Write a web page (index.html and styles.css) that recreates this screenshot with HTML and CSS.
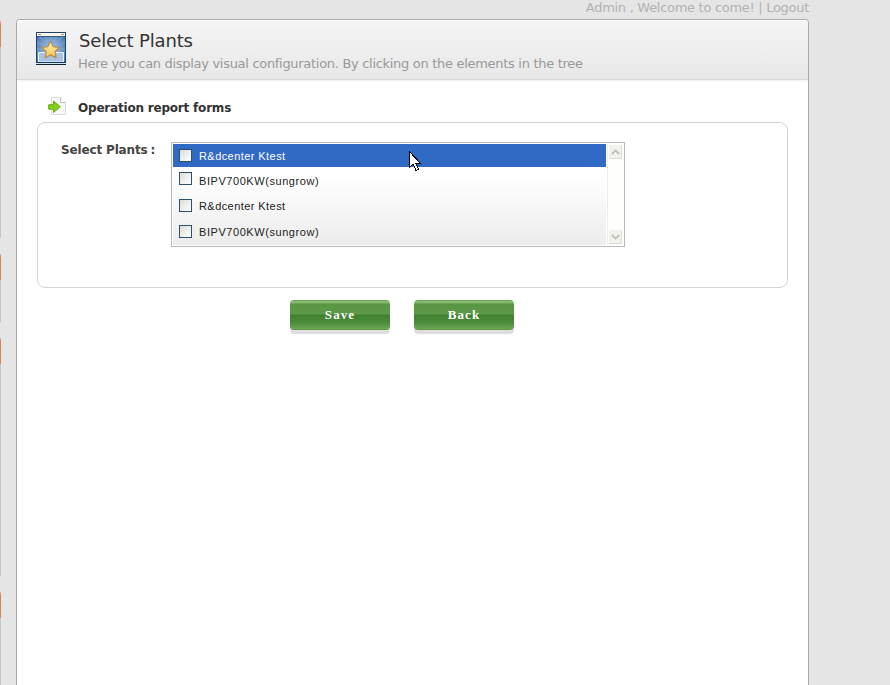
FILE: index.html
```html
<!DOCTYPE html>
<html lang="en">
<head>
<meta charset="utf-8">
<title>Select Plants</title>
<link rel="stylesheet" href="styles.css">
</head>
<body>
<div class="page">
  <aside class="rail">
    <i class="tab tab-first"></i><i class="line line-a"></i>
    <i class="tab"></i><i class="line line-b"></i>
    <i class="tab"></i><i class="line line-c"></i>
    <i class="tab"></i><i class="line line-d"></i>
  </aside>
  <div class="main">
    <div class="topbar"><span class="welcome">Admin , Welcome to come! | Logout</span></div>
    <section class="window">
      <header class="head">
        <svg class="head-icon" width="30" height="33" viewBox="0 0 30 33">
          <defs>
            <radialGradient id="sky" cx=".5" cy=".55" r=".65"><stop offset="0" stop-color="#a9cdec"/><stop offset="1" stop-color="#4673ad"/></radialGradient>
            <linearGradient id="gold" x2="0" y2="1"><stop offset="0" stop-color="#fff3a0"/><stop offset="1" stop-color="#f3c35a"/></linearGradient>
          </defs>
          <rect x=".5" y=".5" width="29" height="30" fill="url(#sky)" stroke="#24415f"/>
          <path d="M15 17 3 4M15 17 9 4M15 17V4M15 17 21 4M15 17 27 4M15 17 1 10M15 17 29 10M15 17 1 17M15 17H29" stroke="#86b1dc" stroke-width="1" opacity=".65"/>
          <rect x="1" y="1" width="28" height="3" fill="#f7f7f4"/>
          <path d="M2 2.5h3M25 2.500h3" stroke="#bd9358"/>
          <path d="M1 4.5h28" stroke="#38597f"/>
          <path d="M2.500 30V20.500h25V30z" fill="#a9c2df" stroke="#e8f2fb"/>
          <path d="M14.600 9.200l2.700 5.400 6 .9-4.300 4.200 1 6-5.400-2.800-5.400 2.800 1-6-4.300-4.200 6-.9z" fill="url(#gold)" stroke="#b68b50" stroke-width="1.2" stroke-linejoin="round"/>
          <path d="M0 30.500h30" stroke="#14385a"/><path d="M0 31.500h30" stroke="#d3e5ef"/><path d="M0 32.500h30" stroke="#10202c"/>
        </svg>
        <div class="head-text">
          <h1>Select Plants</h1>
          <p>Here you can display visual configuration. By clicking on the elements in the tree</p>
        </div>
      </header>
      <div class="content">
        <div class="section-title">
          <svg width="19" height="20" viewBox="0 0 19 20">
            <path d="M3.500 1.500h9l5 5v12h-14z" fill="#f8f8f8" stroke="#dcdcdc"/>
            <path d="M12.500 1.500v5h5" fill="#fff" stroke="#bdbdbd"/>
            <path d="M.7 8.700h4.800V5l6.800 5.800-6.800 5.700V13.200H.7z" fill="#84ce13" stroke="#66ae18" stroke-linejoin="round"/>
          </svg>
          <h2>Operation report forms</h2>
        </div>
        <div class="panel">
          <div class="label"><span>Select Plants</span><b>:</b></div>
          <div class="listbox">
            <ul class="list">
              <li class="row selected"><i class="check"></i><span class="name-a">R&amp;dcenter Ktest</span></li>
              <li class="row second"><i class="check"></i><span class="name-b">BIPV700KW(sungrow)</span></li>
              <li class="row third"><i class="check"></i><span class="name-a">R&amp;dcenter Ktest</span></li>
              <li class="row"><i class="check"></i><span class="name-b">BIPV700KW(sungrow)</span></li>
            </ul>
            <div class="scroll">
              <div class="arrow"><svg width="9" height="6" viewBox="0 0 9 6"><path d="M.8 5 4.500 1.400 8.200 5" fill="none" stroke="#bebeb8" stroke-width="1.8"/></svg></div>
              <div class="arrow"><svg width="9" height="6" viewBox="0 0 9 6"><path d="M.8 1 4.500 4.600 8.200 1" fill="none" stroke="#bebeb8" stroke-width="1.8"/></svg></div>
            </div>
          </div>
        </div>
        <div class="actions">
          <button class="btn"><span>Save</span></button>
          <button class="btn"><span>Back</span></button>
        </div>
      </div>
    </section>
  </div>
</div>
<svg class="cursor" width="12" height="21" viewBox="0 0 12 21" shape-rendering="crispEdges"><path d="M.5.5v16l3.500-3.500 3 6.500 2.500-1L7 12.500h4.500z" fill="#fff" stroke="#000"/></svg>
</body>
</html>
```
FILE: styles.css
```css
* { box-sizing: border-box; }
body { margin: 0; height: 685px; overflow: hidden; background: #e5e5e5; font-family: "DejaVu Sans", sans-serif; color: #333; }
h1, h2, p, ul { margin: 0; padding: 0; }
.page { display: flex; height: 685px; }
.rail { width: 16px; display: flex; flex-direction: column; }
.rail i { display: block; width: 1px; flex: none; }
.tab { height: 26px; margin-top: 16px; background: linear-gradient(#e2b09a, #cf8455 4px, #d18a5c); }
.tab-first { margin-top: 21px; }
.line { background: #c6c6c6; }
.line-a { height: 191px; }
.line-b { height: 42px; }
.line-c { height: 212px; }
.line-d { height: 67px; }
.main { width: 793px; display: flex; flex-direction: column; }
.topbar { height: 19px; text-align: right; font-size: 13px; line-height: 15px; color: #b2b2b2; white-space: nowrap; }
.welcome { letter-spacing: -.29px; }
.window { flex: 1; border: 1px solid #a9a9a9; border-bottom: 0; border-radius: 4px 4px 0 0; background: #fff; overflow: hidden; }
.head { height: 60px; display: flex; padding: 12px 0 0 19px; background: linear-gradient(#f5f5f5, #e8e8e8); border-bottom: 1px solid #d8d8d8; box-shadow: inset 0 1px #fff, 0 1px 2px #eee; }
.head-icon { flex: none; }
.head-text { padding-left: 12px; white-space: nowrap; }
h1 { font-size: 18px; font-weight: 400; line-height: 18px; padding-left: 1px; letter-spacing: -.17px; }
.head p { font-size: 13px; line-height: 16px; color: #999; margin-top: 6px; letter-spacing: -.3px; }
.content { padding: 16px 20px 0; }
.section-title { height: 26px; display: flex; padding-left: 11px; }
h2 { font-size: 12px; line-height: 25px; padding-left: 11px; white-space: nowrap; letter-spacing: -.2px; }
.panel { height: 166px; border: 1px solid #d4d4d4; border-radius: 8px; display: flex; padding: 19px 0 0 23px; }
.label { width: 110px; font-size: 12px; font-weight: bold; line-height: 17px; white-space: nowrap; color: #444; letter-spacing: -.15px; }
.label b { margin-left: 3px; }
.listbox { width: 454px; height: 105px; border: 1px solid #b8b8b8; padding: 1px; display: flex; background: #fff; }
.list { width: 433px; flex: none; list-style: none; font-family: "Liberation Sans", sans-serif; font-size: 11px; background: linear-gradient(#fff 32%, #ececec); color: #222; }
.row { height: 25px; display: flex; align-items: center; padding-left: 6px; white-space: nowrap; }
.row span { margin-left: 7px; }
.selected { height: 23px; background: #316ac5; color: #fff; margin-bottom: 1px; }
.third { margin-bottom: 1px; }
.second .check { margin-top: -5px; }
.check { width: 13px; height: 13px; border: 1px solid #2b5268; background: linear-gradient(135deg, #dcdcd7, #fff); }
.name-a { letter-spacing: .43px; }
.name-b { letter-spacing: .56px; }
.scroll { flex: 1; margin-left: 1px; border-left: 1px solid #eeede5; background: #fefefb; display: flex; flex-direction: column; justify-content: space-between; }
.arrow { height: 16px; display: flex; align-items: center; justify-content: center; background: #f2f1ec; border: 1px solid #fff; border-radius: 2px; box-shadow: inset -1px -1px #dddcd4; }
.actions { display: flex; gap: 24px; padding: 12px 0 0 253px; }
.btn { width: 100px; height: 30px; padding: 0; border: 0; border-radius: 4px; background: linear-gradient(#4d8c3a 0, #8abb72 1px, #82b56a 3px, #589645 4px, #5c9a47 14px, #3f812f 15px, #4a8b38 22px, #6aa554 29px, #4f903d 30px); box-shadow: 0 4px #dedede; color: #fff; font: bold 13px/30px "Liberation Serif", serif; letter-spacing: 1.1px; }
.cursor { position: absolute; left: 409px; top: 151px; }
```
